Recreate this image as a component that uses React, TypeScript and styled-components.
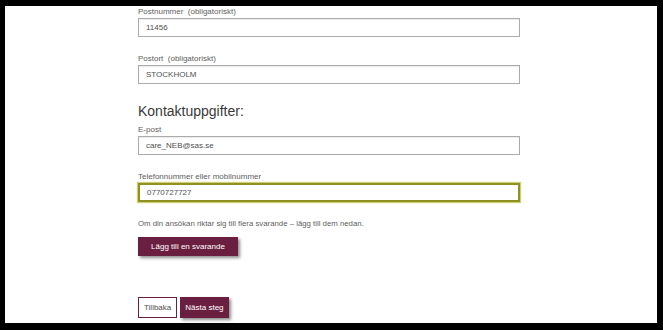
import styled, { createGlobalStyle } from "styled-components";

const GlobalStyle = createGlobalStyle`
  html, body {
    margin: 0;
    padding: 0;
    background: #000;
  }
  body {
    font-family: "Liberation Sans", Arial, sans-serif;
  }
`;

const Frame = styled.div`
  background: #fff;
  margin: 6px 6px 7px 5px;
  height: 317px;
  overflow: hidden;
  box-sizing: border-box;
  padding: 1px 0 0 133px;
`;

const Form = styled.div`
  width: 382px;
  display: flex;
  flex-direction: column;
`;

const Field = styled.div`
  display: flex;
  flex-direction: column;
  margin-bottom: 17px;
`;

const Label = styled.label`
  font-size: 8px;
  line-height: 10px;
  color: #606060;
  margin-bottom: 1px;
  white-space: pre;
`;

const Input = styled.input<{ $focused?: boolean }>`
  box-sizing: border-box;
  width: 100%;
  height: 19px;
  margin: 0;
  padding: 0 7px;
  font-family: "Liberation Sans", Arial, sans-serif;
  font-size: 8px;
  color: #505050;
  background: #fff;
  border: ${(p) => (p.$focused ? "2px solid #8f9120" : "1px solid #ababab")};
  box-shadow: ${(p) =>
    p.$focused ? "0 0 1px 1px #cfd17a" : "inset 0 1px 1px rgba(0, 0, 0, 0.08)"};
  outline: none;
  border-radius: 0;
  caret-color: #333;
`;

const Heading = styled.h2`
  margin: 2px 0 6px;
  font-size: 14px;
  line-height: 16px;
  font-weight: normal;
  color: #3a3a3a;
`;

const Note = styled.p`
  margin: 0 0 8px;
  font-size: 7.8px;
  line-height: 10px;
  color: #606060;
`;

const Actions = styled.div`
  display: flex;
  gap: 3px;
  margin-top: 41px;
`;

const Button = styled.button<{ $variant?: "primary" | "outline" }>`
  box-sizing: border-box;
  height: 21px;
  padding: 0 ${(p) => (p.$variant === "outline" ? "5px" : "4px")};
  font-family: "Liberation Sans", Arial, sans-serif;
  font-size: 8px;
  cursor: pointer;
  border-radius: 0;
  color: ${(p) => (p.$variant === "outline" ? "#505050" : "#fff")};
  background: ${(p) => (p.$variant === "outline" ? "#fff" : "#6b1f40")};
  border: 1px solid #6b1f40;
  box-shadow: ${(p) =>
    p.$variant === "outline" ? "none" : "2px 2px 3px rgba(0, 0, 0, 0.45)"};
`;

const AddButton = styled(Button)`
  align-self: flex-start;
  width: 100px;
  height: 19px;
`;

function App() {
  return (
    <>
      <GlobalStyle />
      <Frame>
        <Form>
          <Field>
            <Label>Postnummer  (obligatoriskt)</Label>
            <Input readOnly defaultValue="11456" />
          </Field>
          <Field>
            <Label>Postort  (obligatoriskt)</Label>
            <Input readOnly defaultValue="STOCKHOLM" />
          </Field>
          <Heading>Kontaktuppgifter:</Heading>
          <Field>
            <Label>E-post</Label>
            <Input readOnly defaultValue="care_NEB@sas.se" />
          </Field>
          <Field>
            <Label>Telefonnummer eller mobilnummer</Label>
            <Input $focused autoFocus defaultValue="0770727727" />
          </Field>
          <Note>
            Om din ansökan riktar sig till flera svarande – lägg till dem nedan.
          </Note>
          <AddButton $variant="primary">Lägg till en svarande</AddButton>
          <Actions>
            <Button $variant="outline">Tillbaka</Button>
            <Button $variant="primary">Nästa steg</Button>
          </Actions>
        </Form>
      </Frame>
    </>
  );
}

export default App;
